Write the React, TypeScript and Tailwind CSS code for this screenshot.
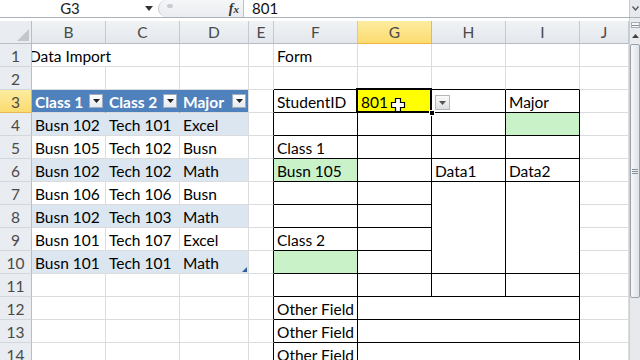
import React from "react";
import clsx from "clsx";

type Spec = {
  t?: React.ReactNode;
  rc?: string;
  bc?: string;
  bg?: string;
  span?: string;
  skip?: boolean;
  cls?: string;
  extra?: React.ReactNode;
};

const GR = "border-r-[#dadcdd]";
const GB = "border-b-[#dadcdd]";
const KR = "border-r-black";
const KB = "border-b-black";
const BAND = "bg-[#dce6f1]";
const GREEN = "bg-[#c9f2c9]";
const cols = ["B", "C", "D", "E", "F", "G", "H", "I", "J"];

const tableRows: Record<number, string[]> = {
  4: ["Busn 102", "Tech 101", "Excel"],
  5: ["Busn 105", "Tech 102", "Busn"],
  6: ["Busn 102", "Tech 102", "Math"],
  7: ["Busn 106", "Tech 106", "Busn"],
  8: ["Busn 102", "Tech 103", "Math"],
  9: ["Busn 101", "Tech 107", "Excel"],
  10: ["Busn 101", "Tech 101", "Math"],
};

function FilterButton() {
  return (
    <span className="absolute right-[2px] top-[4px] flex h-[14px] w-[14px] items-center justify-center border border-[#9fadc0] bg-gradient-to-b from-white to-[#e6eaf0]">
      <svg width="7" height="4" viewBox="0 0 7 4">
        <polygon points="0,0 7,0 3.5,4" fill="#222" />
      </svg>
    </span>
  );
}

function TableHead({ label }: { label: string }) {
  return (
    <>
      <span className="font-bold text-white">{label}</span>
      <FilterButton />
    </>
  );
}

function buildSpec() {
  const s: Record<string, Spec> = {};
  const set = (k: string, v: Spec) => {
    s[k] = { ...s[k], ...v };
  };

  set("B1", { t: <span className="-ml-[6px]">Data Import</span>, span: "col-span-2" });
  set("C1", { skip: true });
  set("F1", { t: "Form" });

  // the import table
  set("B3", { t: <TableHead label="Class 1" />, bg: "bg-[#4f81bd]", rc: "border-r-[#4f81bd]" });
  set("C3", { t: <TableHead label="Class 2" />, bg: "bg-[#4f81bd]", rc: "border-r-[#4f81bd]" });
  set("D3", { t: <TableHead label="Major" />, bg: "bg-[#4f81bd]" });
  for (let r = 4; r <= 10; r++) {
    const band = r % 2 === 0;
    set("B" + r, { t: tableRows[r][0], bg: band ? BAND : "", rc: band ? "border-r-[#dce6f1]" : GR });
    set("C" + r, { t: tableRows[r][1], bg: band ? BAND : "", rc: band ? "border-r-[#dce6f1]" : GR });
    set("D" + r, { t: tableRows[r][2], bg: band ? BAND : "" });
  }
  set("D10", {
    extra: (
      <svg className="absolute bottom-[1px] right-[1px]" width="5" height="5" viewBox="0 0 5 5">
        <polygon points="5,0 5,5 0,5" fill="#2f5d96" />
      </svg>
    ),
  });

  // the form borders
  ["F2", "G2", "H2", "I2"].forEach((k) => set(k, { bc: KB }));
  for (let r = 3; r <= 14; r++) {
    set("E" + r, { rc: KR });
    set("F" + r, { rc: KR, bc: KB });
  }
  for (let r = 3; r <= 11; r++) set("G" + r, { rc: KR, bc: KB });
  for (const r of [3, 4, 5, 6, 11]) {
    set("H" + r, { rc: KR, bc: KB });
    set("I" + r, { rc: KR, bc: KB });
  }
  set("H7", { rc: KR, bc: KB, span: "row-span-4" });
  set("I7", { rc: KR, bc: KB, span: "row-span-4" });
  for (let r = 8; r <= 10; r++) {
    set("H" + r, { skip: true });
    set("I" + r, { skip: true });
  }
  for (let r = 12; r <= 14; r++) {
    set("F" + r, { t: "Other Field" });
    set("G" + r, { rc: KR, bc: KB, span: "col-span-3" });
    set("H" + r, { skip: true });
    set("I" + r, { skip: true });
  }

  // form contents
  set("F3", { t: "StudentID" });
  set("G3", {
    t: "801",
    bg: "bg-[#ffff00]",
    extra: (
      <>
        <span className="pointer-events-none absolute -left-[2px] -top-[2px] z-20 h-[25px] w-[76px] border-2 border-black" />
        <span className="absolute -bottom-[4px] -right-[4px] z-30 h-[6px] w-[6px] border border-white bg-black" />
        <svg className="absolute left-[32px] top-[7px] z-30" width="16" height="16" viewBox="0 0 16 16">
          <path d="M5.5 1.5h5v4h4v5h-4v4h-5v-4h-4v-5h4z" fill="#fff" stroke="#000" strokeWidth="1.2" />
        </svg>
      </>
    ),
  });
  set("H3", {
    extra: (
      <span className="absolute left-[3px] top-[5px] flex h-[15px] w-[15px] items-center justify-center border border-[#b4b8bd] bg-gradient-to-b from-[#fafafa] to-[#dedfe1]">
        <svg width="7" height="4" viewBox="0 0 7 4">
          <polygon points="0,0 7,0 3.5,4" fill="#555" />
        </svg>
      </span>
    ),
  });
  set("I3", { t: "Major" });
  set("I4", { bg: GREEN });
  set("F5", { t: "Class 1" });
  set("F6", { t: "Busn 105", bg: GREEN });
  set("H6", { t: "Data1" });
  set("I6", { t: "Data2" });
  set("F9", { t: "Class 2" });
  set("F10", { bg: GREEN });
  return s;
}

function FormulaBar() {
  return (
    <div className="flex h-[18px] w-[640px] border-b border-b-[#a9b1bb] bg-white">
      <div className="flex w-[140px] items-center justify-center text-[15px] text-[#222]">G3</div>
      <div className="flex w-[18px] items-center justify-center">
        <svg width="8" height="5" viewBox="0 0 8 5">
          <polygon points="0,0 8,0 4,5" fill="#333" />
        </svg>
      </div>
      <div className="relative flex w-[85px] items-center justify-end rounded-l-full border-l border-[#c5cad0] bg-gradient-to-b from-[#f5f6f8] to-[#eaecef] pr-[4px]">
        <span className="absolute left-[8px] top-[4px] h-[4px] w-[6px] rounded-full bg-[#c7ccd2]" />
        <span className="font-['Liberation_Serif',serif] text-[14px] font-bold italic text-[#333]">
          f<span className="text-[11px]">x</span>
        </span>
      </div>
      <div className="flex flex-1 items-center border-l border-l-[#bcc3cb] pl-[8px] text-[15px] text-[#111]">801</div>
      <div className="flex w-[11px] items-center justify-center border-l border-l-[#c5cad0] bg-[#e6e9ed]">
        <svg width="7" height="5" viewBox="0 0 7 5">
          <polyline points="0.5,0.5 3.5,4 6.5,0.5" fill="none" stroke="#555" strokeWidth="1.3" />
        </svg>
      </div>
    </div>
  );
}

function ScrollBar() {
  return (
    <div className="flex w-[11px] flex-col border-l border-l-[#c9ced4] bg-[#e9ebee]">
      <div className="h-[3px]" />
      <div className="mx-auto mt-[1px] flex h-[6px] w-[9px] flex-col justify-center gap-[1px] border border-[#a8aeb5] bg-[#f5f6f8]">
        <span className="h-px bg-[#8a9098]" />
      </div>
      <div className="flex h-[16px] items-center justify-center">
        <svg width="7" height="4" viewBox="0 0 7 4">
          <polygon points="3.5,0 7,4 0,4" fill="#444" />
        </svg>
      </div>
      <div className="flex h-[254px] items-center justify-center rounded-[2px] border border-[#9aa1a9] bg-gradient-to-r from-[#f6f7f9] to-[#dfe3e8]">
        <div className="flex w-[6px] flex-col gap-[1px]">
          <span className="h-px bg-[#8b9199]" />
          <span className="h-px bg-[#8b9199]" />
          <span className="h-px bg-[#8b9199]" />
        </div>
      </div>
      <div className="flex-1 bg-[#e7e9ec]" />
    </div>
  );
}

export default function App() {
  const spec = buildSpec();
  const cells: React.ReactNode[] = [];

  cells.push(
    <div key="corner" className="relative border-r border-b border-r-[#b6bdc6] border-b-[#b6bdc6] bg-[#e9ecf0]">
      <svg className="absolute bottom-[2px] right-[2px]" width="12" height="12" viewBox="0 0 12 12">
        <polygon points="12,0 12,12 0,12" fill="#c3c7cc" />
      </svg>
    </div>
  );
  cols.forEach((c) =>
    cells.push(
      <div
        key={"h" + c}
        className={clsx(
          "flex items-center justify-center border-r border-b pt-[2px] text-[15.5px] text-[#4a4a4a]",
          c === "G"
            ? "border-r-[#e9b94f] border-b-[#efb33f] bg-gradient-to-b from-[#fdec9f] to-[#fbdb6f]"
            : "border-r-[#c4cad2] border-b-[#b6bdc6] bg-gradient-to-b from-[#f1f3f5] to-[#e3e7ec]"
        )}
      >
        {c}
      </div>
    )
  );

  for (let r = 1; r <= 14; r++) {
    cells.push(
      <div
        key={"r" + r}
        className={clsx(
          "relative z-10 flex items-center justify-center border-r border-b pt-[3px] text-[15.5px] text-[#4a4a4a]",
          r === 3
            ? "border-r-[#efb33f] border-b-[#e9b94f] bg-gradient-to-b from-[#fdec9f] to-[#fbdb6f]"
            : "border-r-[#b6bdc6] border-b-[#d2d7dd] bg-[#e9ecf0]"
        )}
      >
        {r}
      </div>
    );
    cols.forEach((c) => {
      const s = spec[c + r] || {};
      if (s.skip) return;
      cells.push(
        <div
          key={c + r}
          className={clsx(
            "relative flex items-center whitespace-nowrap border-r border-b pl-[3px] pt-[3px] text-[15.5px] leading-none text-black",
            s.rc ?? GR,
            s.bc ?? GB,
            s.bg,
            s.span,
            s.cls
          )}
        >
          {s.t}
          {s.extra}
        </div>
      );
    });
  }

  return (
    <div className="flex h-[360px] w-[640px] flex-col overflow-hidden bg-white font-['Lato',sans-serif]">
      <FormulaBar />
      <div className="flex min-h-0 flex-1">
        <div className="flex w-[629px] flex-col">
          <div className="h-[3px] shrink-0 bg-white" />
          <div className="grid auto-rows-[23px] grid-cols-[32px_74px_74px_69px_25px_84px_74px_74px_74px_49px]">
            {cells}
          </div>
        </div>
        <ScrollBar />
      </div>
    </div>
  );
}
